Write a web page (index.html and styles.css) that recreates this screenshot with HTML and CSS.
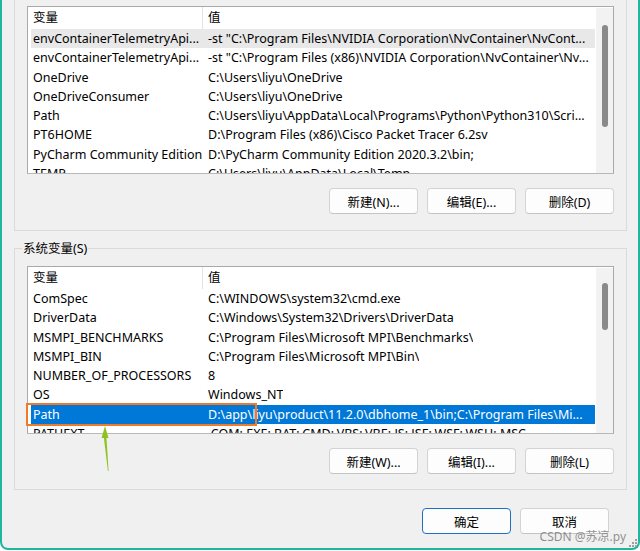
FILE: index.html
```html
<!DOCTYPE html>
<html lang="zh-CN">
<head>
  <meta charset="UTF-8" />
  <title>环境变量</title>
  <link rel="stylesheet" href="styles.css">
</head>
<body>
  <div class="dialog">
    <div class="group user">
      <div class="list">
        <div class="list-body">
          <div class="row head"><span class="c1">变量</span><span class="c2">值</span></div>
          <div class="row hover"><span class="c1">envContainerTelemetryApi...</span><span class="c2">-st "C:\Program Files\NVIDIA Corporation\NvContainer\NvCont...</span></div>
          <div class="row"><span class="c1">envContainerTelemetryApi...</span><span class="c2">-st "C:\Program Files (x86)\NVIDIA Corporation\NvContainer\Nv...</span></div>
          <div class="row"><span class="c1">OneDrive</span><span class="c2">C:\Users\liyu\OneDrive</span></div>
          <div class="row"><span class="c1">OneDriveConsumer</span><span class="c2">C:\Users\liyu\OneDrive</span></div>
          <div class="row"><span class="c1">Path</span><span class="c2">C:\Users\liyu\AppData\Local\Programs\Python\Python310\Scri...</span></div>
          <div class="row"><span class="c1">PT6HOME</span><span class="c2">D:\Program Files (x86)\Cisco Packet Tracer 6.2sv</span></div>
          <div class="row"><span class="c1">PyCharm Community Edition</span><span class="c2">D:\PyCharm Community Edition 2020.3.2\bin;</span></div>
          <div class="row"><span class="c1">TEMP</span><span class="c2">C:\Users\liyu\AppData\Local\Temp</span></div>
        </div>
        <div class="scroll"><div class="thumb thumb-user"></div></div>
      </div>
      <div class="buttons">
        <button>新建(N)...</button>
        <button>编辑(E)...</button>
        <button>删除(D)</button>
      </div>
    </div>

    <div class="group system">
      <div class="group-title">系统变量(S)</div>
      <div class="list">
        <div class="list-body">
          <div class="row head"><span class="c1">变量</span><span class="c2">值</span></div>
          <div class="row"><span class="c1">ComSpec</span><span class="c2">C:\WINDOWS\system32\cmd.exe</span></div>
          <div class="row"><span class="c1">DriverData</span><span class="c2">C:\Windows\System32\Drivers\DriverData</span></div>
          <div class="row"><span class="c1">MSMPI_BENCHMARKS</span><span class="c2">C:\Program Files\Microsoft MPI\Benchmarks\</span></div>
          <div class="row"><span class="c1">MSMPI_BIN</span><span class="c2">C:\Program Files\Microsoft MPI\Bin\</span></div>
          <div class="row"><span class="c1">NUMBER_OF_PROCESSORS</span><span class="c2">8</span></div>
          <div class="row"><span class="c1">OS</span><span class="c2">Windows_NT</span></div>
          <div class="row selected"><span class="c1">Path</span><span class="c2">D:\app\liyu\product\11.2.0\dbhome_1\bin;C:\Program Files\Mi...</span></div>
          <div class="row"><span class="c1">PATHEXT</span><span class="c2">.COM;.EXE;.BAT;.CMD;.VBS;.VBE;.JS;.JSE;.WSF;.WSH;.MSC</span></div>
        </div>
        <div class="scroll"><div class="thumb thumb-system"></div></div>
      </div>
      <div class="buttons">
        <button>新建(W)...</button>
        <button>编辑(I)...</button>
        <button>删除(L)</button>
      </div>
    </div>

    <div class="footer">
      <button class="default">确定</button>
      <button>取消</button>
    </div>

    <!-- annotations drawn on top of the screenshot -->
    <div class="mark"></div>
    <svg class="arrow" width="12" height="48" viewBox="0 0 12 48">
      <polygon points="5,1 1.5,13 8.5,13" fill="#8dc21f"/>
      <polygon points="3.8,12 6.4,12 8.6,46 7.9,46" fill="#8dc21f"/>
    </svg>
    <svg class="grip" width="10" height="10" viewBox="0 0 10 10">
      <rect x="7" y="1" width="2" height="2" fill="#a0a0a0"/>
      <rect x="4" y="4" width="2" height="2" fill="#a0a0a0"/>
      <rect x="7" y="4" width="2" height="2" fill="#a0a0a0"/>
      <rect x="1" y="7" width="2" height="2" fill="#a0a0a0"/>
      <rect x="4" y="7" width="2" height="2" fill="#a0a0a0"/>
      <rect x="7" y="7" width="2" height="2" fill="#a0a0a0"/>
    </svg>
    <div class="watermark">CSDN @苏凉.py</div>
  </div>
</body>
</html>
```

FILE: styles.css
```css
body {
  margin: 0;
  background: #fff;
  font-family: "Noto Sans", "Noto Sans CJK SC", sans-serif;
  font-size: 12.5px;
  color: #000;
}
.dialog {
  position: relative;
  width: 640px;
  height: 550px;
  box-sizing: border-box;
  background: #f0f0f0;
  border: 2px solid #1fb5a1;
  border-top: none;
  border-radius: 0 0 8px 8px;
  overflow: hidden;
}
.group {
  margin: 0 11px 0 12px;
  border: 1px solid #dadada;
  padding: 0 12px 15px 12px;
}
.group.user {
  border-top: none;
  padding-top: 6px;
  padding-bottom: 16px;
}
.group.system {
  margin-top: 17px;
}
.group-title {
  width: fit-content;
  height: 18px;
  line-height: 18px;
  margin: -9px 0 0 -5px;
  padding: 0 1px;
  background: #f0f0f0;
}
.system .list {
  margin-top: 8px;
}
.list {
  display: flex;
  height: 168px;
  box-sizing: border-box;
  border: 1px solid #a9a9a9;
  border-bottom-color: #b8b8b8;
  background: #fff;
}
.list-body {
  flex: 1;
  overflow: hidden;
  padding: 0 1px 0 3px;
}
.row {
  display: flex;
  height: 19.3px;
  line-height: 19.3px;
  white-space: nowrap;
}
.row.head {
  height: 22px;
  line-height: 22px;
}
.c1 {
  width: 170px;
  flex: none;
  padding-left: 2px;
  overflow: hidden;
}
.c2 {
  padding-left: 5px;
  overflow: hidden;
}
.head .c1 {
  border-right: 1px solid #e3e3e3;
  width: 169px;
}
.row.hover {
  background: #e8e8e8;
}
.row.selected {
  background: #0078d7;
  color: #fff;
}
.scroll {
  width: 17px;
  flex: none;
  margin-top: 1px;
  background: #f2f2f2;
}
.thumb {
  width: 6px;
  margin-left: 6px;
  border-radius: 3px;
  background: #8a8a8a;
}
.thumb-user {
  margin-top: 17px;
  height: 102px;
}
.thumb-system {
  margin-top: 15px;
  height: 47px;
}
.buttons, .footer {
  display: flex;
  justify-content: flex-end;
  gap: 9px;
}
.buttons {
  margin-top: 14px;
}
.footer {
  margin-top: 18px;
  padding-right: 29px;
}
button {
  width: 89px;
  height: 26px;
  padding: 0;
  font-family: inherit;
  font-size: 12.5px;
  color: #000;
  background: #fdfdfd;
  border: 1px solid #d3d3d3;
  border-bottom-color: #c4c4c4;
  border-radius: 4px;
}
button.default {
  border: 1px solid #1f6fc5;
}
.mark {
  position: absolute;
  left: 24px;
  top: 403px;
  width: 231px;
  height: 23px;
  box-sizing: border-box;
  border: 2px solid #ee7a2a;
}
.arrow {
  position: absolute;
  left: 98px;
  top: 425px;
}
.grip {
  position: absolute;
  right: 0;
  bottom: 0;
}
.watermark {
  position: absolute;
  right: 12px;
  bottom: 3px;
  font-size: 12px;
  color: rgba(110, 110, 110, 0.75);
}
```
